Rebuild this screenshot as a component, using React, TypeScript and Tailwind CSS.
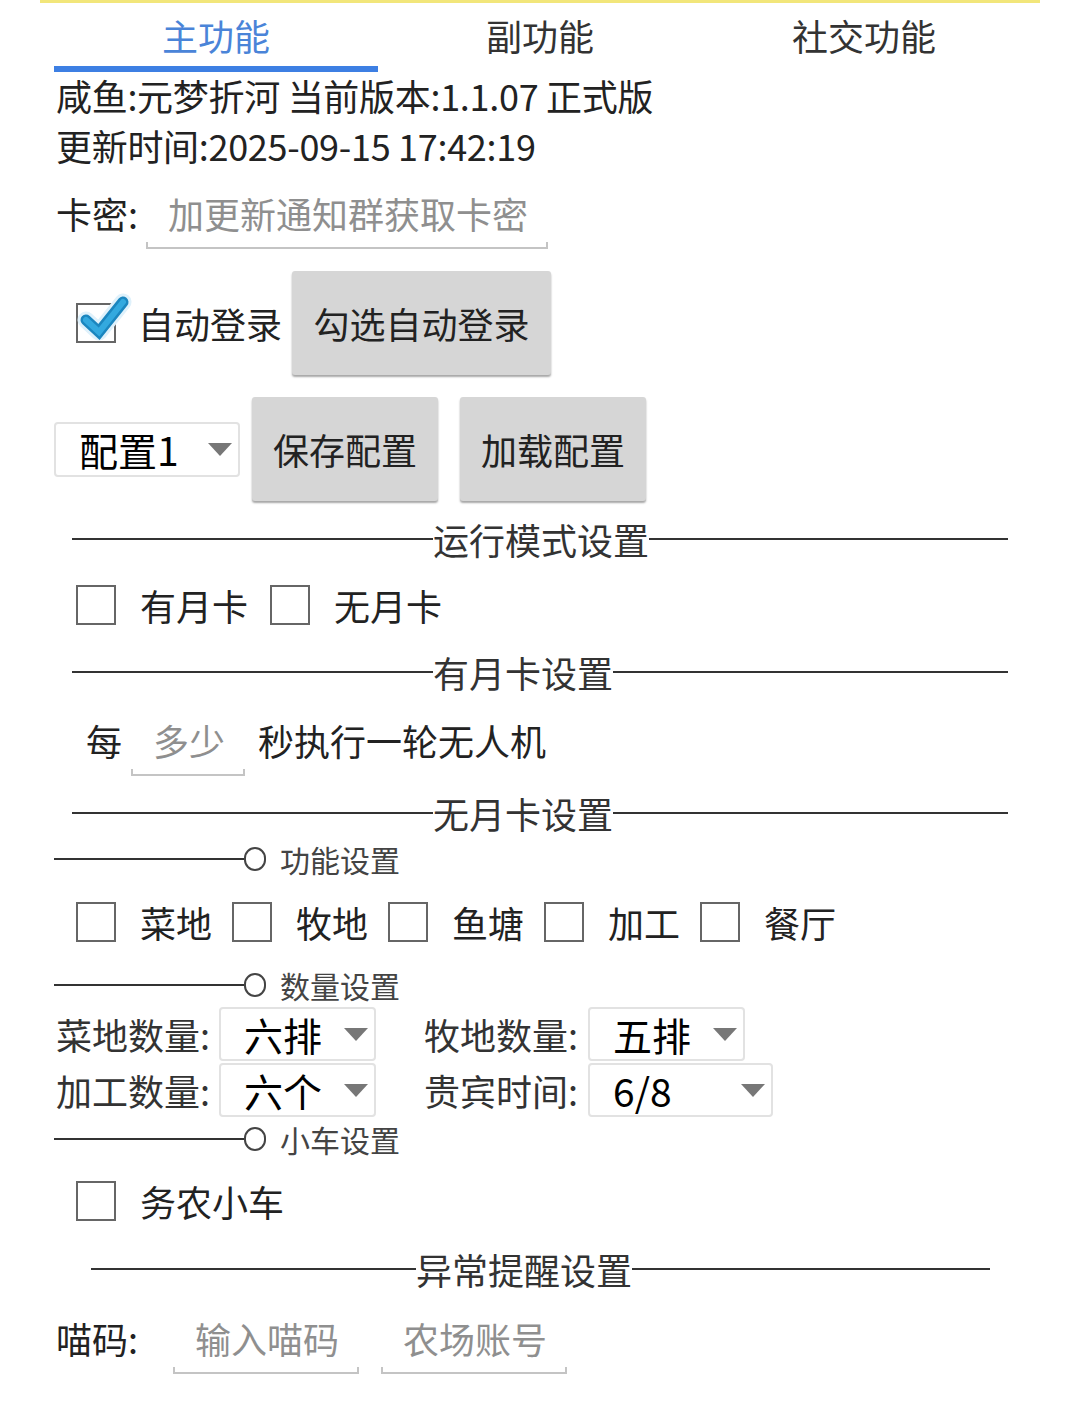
import React from "react";

const font = "font-['Noto_Sans_CJK_SC','Noto_Sans',sans-serif]";

function Box() {
  return <div className="w-[40px] h-[40px] border-2 border-[#666] bg-white shrink-0" />;
}

function CheckItem({ label, gap = "mr-[22px]" }: { label: string; gap?: string }) {
  return (
    <div className={`flex items-center ${gap}`}>
      <Box />
      <span className="ml-[24px] text-[36px] leading-[44px] text-[#222]">{label}</span>
    </div>
  );
}

function Arrow() {
  return (
    <svg width="24" height="13" viewBox="0 0 24 13" className="shrink-0">
      <path d="M0 0 L24 0 L12 13 Z" fill="#777" />
    </svg>
  );
}

function Select({ value, width, big = false }: { value: string; width: string; big?: boolean }) {
  return (
    <div
      className={`${width} ${big ? "h-[55px]" : "h-[54px]"} flex items-center justify-between pl-[23px] pr-[6px] border-2 border-[#e2e2e2] rounded-[4px] bg-white`}
    >
      <span className="text-[39px] leading-[48px] text-black">{value}</span>
      <Arrow />
    </div>
  );
}

function GreyButton({ label, width }: { label: string; width: string }) {
  return (
    <div
      className={`${width} h-[104px] flex items-center justify-center bg-[#d6d6d6] rounded-[3px] shadow-[0_2px_2px_rgba(0,0,0,0.35)] text-[36px] text-[#222]`}
    >
      {label}
    </div>
  );
}

function Underlined({ placeholder, width }: { placeholder: string; width: string }) {
  return (
    <div className={`${width} flex flex-col`}>
      <span className="h-[44px] pl-[22px] text-[36px] leading-[44px] text-[#8f8f8f] whitespace-nowrap">
        {placeholder}
      </span>
      <div className="mt-[7px] h-[7px] border-x-2 border-b-2 border-[#c4c4c4]" />
    </div>
  );
}

function Divider({ text, left, className = "" }: { text: string; left: string; className?: string }) {
  return (
    <div className={`flex items-center h-[50px] ${className}`}>
      <div className={`${left} h-[2px] bg-[#333]`} />
      <span className="text-[36px] leading-[50px] text-[#333] whitespace-nowrap">{text}</span>
      <div className="flex-1 h-[2px] bg-[#333]" />
    </div>
  );
}

function SubDivider({ text, className = "" }: { text: string; className?: string }) {
  return (
    <div className={`flex items-center h-[40px] ${className}`}>
      <div className="w-[190px] h-[2px] bg-[#333]" />
      <div className="w-[22px] h-[24px] rounded-full border-2 border-[#444]" />
      <span className="ml-[14px] text-[30px] leading-[40px] text-[#444]">{text}</span>
    </div>
  );
}

export default function App() {
  return (
    <div className={`w-[1080px] h-[1412px] bg-white overflow-hidden ${font}`}>
      <div className="mx-[40px] h-[3px] bg-[#f2e67a]" />

      {/* tabs */}
      <div className="ml-[54px] w-[972px] flex">
        {[
          { name: "主功能", active: true },
          { name: "副功能", active: false },
          { name: "社交功能", active: false },
        ].map((t) => (
          <div key={t.name} className="flex-1 flex flex-col">
            <div
              className={`h-[63px] flex items-end justify-center pb-[9px] text-[36px] leading-[44px] ${
                t.active ? "text-[#4a84d8]" : "text-[#333]"
              }`}
            >
              {t.name}
            </div>
            <div className={`h-[6px] ${t.active ? "bg-[#3d7fe3]" : ""}`} />
          </div>
        ))}
      </div>

      <div className="-mt-[2px] pl-[56px] text-[36px] leading-[50px] text-[#222] tracking-[-0.3px]">
        <div>咸鱼:元梦折河 当前版本:1.1.07 正式版</div>
        <div>更新时间:2025-09-15 17:42:19</div>
      </div>

      {/* 卡密 */}
      <div className="mt-[21px] pl-[56px] flex items-start">
        <span className="w-[90px] text-[36px] leading-[44px] text-[#222]">卡密:</span>
        <Underlined placeholder="加更新通知群获取卡密" width="w-[402px]" />
      </div>

      {/* 自动登录 */}
      <div className="mt-[22px] pl-[76px] flex items-center h-[104px]">
        <div className="relative w-[40px] h-[40px] border-2 border-[#666] bg-white">
          <svg width="60" height="56" viewBox="0 0 60 56" className="absolute left-[-3px] top-[-16px]">
            <path d="M11 31 L24 43 L48 13" fill="none" stroke="#dff1fb" strokeWidth="17" strokeLinecap="round" strokeLinejoin="round" />
            <path d="M11 31 L24 43 L48 13" fill="none" stroke="#1b86bf" strokeWidth="11" strokeLinecap="round" strokeLinejoin="miter" />
            <path d="M11 31 L24 43 L48 13" fill="none" stroke="#33a9df" strokeWidth="6" strokeLinecap="round" strokeLinejoin="miter" />
          </svg>
        </div>
        <span className="ml-[22px] text-[36px] leading-[44px] text-[#222]">自动登录</span>
        <div className="ml-[10px]">
          <GreyButton label="勾选自动登录" width="w-[259px]" />
        </div>
      </div>

      {/* 配置 */}
      <div className="mt-[22px] pl-[54px] flex items-center h-[104px]">
        <Select value="配置1" width="w-[186px]" big />
        <div className="ml-[12px]">
          <GreyButton label="保存配置" width="w-[186px]" />
        </div>
        <div className="ml-[22px]">
          <GreyButton label="加载配置" width="w-[186px]" />
        </div>
      </div>

      <Divider text="运行模式设置" left="w-[361px]" className="mt-[13px] ml-[72px] w-[936px]" />

      <div className="mt-[16px] pl-[76px] flex items-center h-[50px]">
        <CheckItem label="有月卡" />
        <CheckItem label="无月卡" />
      </div>

      <Divider text="有月卡设置" left="w-[361px]" className="mt-[17px] ml-[72px] w-[936px]" />

      <div className="mt-[21px] pl-[86px] flex items-start">
        <span className="text-[36px] leading-[44px] text-[#222]">每</span>
        <div className="ml-[9px]">
          <Underlined placeholder="多少" width="w-[114px]" />
        </div>
        <span className="ml-[13px] text-[36px] leading-[44px] text-[#222]">秒执行一轮无人机</span>
      </div>

      <Divider text="无月卡设置" left="w-[361px]" className="mt-[12px] ml-[72px] w-[936px]" />

      <SubDivider text="功能设置" className="mt-[1px] ml-[54px]" />

      <div className="mt-[18px] pl-[76px] flex items-center h-[50px]">
        {["菜地", "牧地", "鱼塘", "加工", "餐厅"].map((n) => (
          <div key={n} className="w-[156px] flex items-center">
            <Box />
            <span className="ml-[24px] text-[36px] leading-[44px] text-[#222]">{n}</span>
          </div>
        ))}
      </div>

      <SubDivider text="数量设置" className="mt-[18px] ml-[54px]" />

      <div className="mt-[2px] pl-[56px] flex items-center">
        <span className="w-[163px] text-[36px] leading-[44px] text-[#333]">菜地数量:</span>
        <Select value="六排" width="w-[157px]" />
        <span className="ml-[48px] w-[164px] text-[36px] leading-[44px] text-[#333]">牧地数量:</span>
        <Select value="五排" width="w-[157px]" />
      </div>
      <div className="mt-[2px] pl-[56px] flex items-center">
        <span className="w-[163px] text-[36px] leading-[44px] text-[#333]">加工数量:</span>
        <Select value="六个" width="w-[157px]" />
        <span className="ml-[48px] w-[164px] text-[36px] leading-[44px] text-[#333]">贵宾时间:</span>
        <Select value="6/8" width="w-[185px]" />
      </div>

      <SubDivider text="小车设置" className="mt-[2px] ml-[54px]" />

      <div className="mt-[17px] pl-[76px] flex items-center h-[50px]">
        <CheckItem label="务农小车" />
      </div>

      <Divider text="异常提醒设置" left="w-[325px]" className="mt-[18px] ml-[91px] w-[899px]" />

      <div className="mt-[22px] pl-[56px] flex items-start">
        <span className="w-[117px] text-[36px] leading-[44px] text-[#222]">喵码:</span>
        <Underlined placeholder="输入喵码" width="w-[186px]" />
        <div className="ml-[22px]">
          <Underlined placeholder="农场账号" width="w-[186px]" />
        </div>
      </div>
    </div>
  );
}
